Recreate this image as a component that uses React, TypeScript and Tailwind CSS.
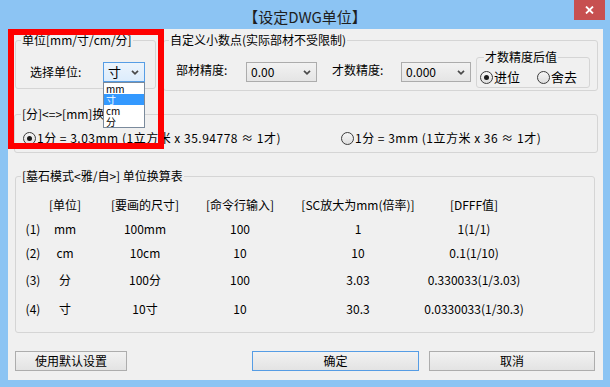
import React from "react";

const FONT = "font-['Noto_Sans_CJK_SC','Noto_Sans',sans-serif]";

function Chevron() {
  return (
    <svg width="8" height="5" viewBox="0 0 8 5" className="shrink-0">
      <path d="M1 0.8l3 3 3-3" fill="none" stroke="#4a4a4a" strokeWidth="1.7" />
    </svg>
  );
}

function Combo({ value, className, focused }: { value: string; className: string; focused?: boolean }) {
  return (
    <div
      className={`flex h-[20px] items-center justify-between border pl-[4px] pr-[5px] ${
        focused
          ? "border-[#569de5] bg-gradient-to-b from-[#ecf4fc] to-[#dcecfc] text-[13px]"
          : "border-[#acacac] bg-gradient-to-b from-[#f2f2f2] to-[#e5e5e5] text-[12px]"
      } ${className}`}
    >
      <span className="leading-[14px]">{value}</span>
      <Chevron />
    </div>
  );
}

function Radio({ checked }: { checked?: boolean }) {
  return (
    <span className="flex h-[13px] w-[13px] shrink-0 items-center justify-center rounded-full border border-[#3c3c3c] bg-gradient-to-b from-[#f6f6f6] to-[#dedede]">
      {checked ? <span className="h-[5px] w-[5px] rounded-full bg-[#1a1a1a]" /> : null}
    </span>
  );
}

function Group({
  legend,
  className,
  legendClass = "ml-[5px]",
  children,
}: {
  legend: string;
  className: string;
  legendClass?: string;
  children?: React.ReactNode;
}) {
  return (
    <fieldset className={`rounded-[3px] border border-[#d5d5d5] ${className}`}>
      <legend className={`px-[1px] leading-[14px] ${legendClass}`}>{legend}</legend>
      {children}
    </fieldset>
  );
}

const rows = [
  ["(1)", "mm", "100mm", "100", "1", "1(1/1)", "h-[24px]"],
  ["(2)", "cm", "10cm", "10", "10", "0.1(1/10)", "h-[24px]"],
  ["(3)", "分", "100分", "100", "3.03", "0.330033(1/3.03)", "h-[30px]"],
  ["(4)", "寸", "10寸", "10", "30.3", "0.0330033(1/30.3)", "h-[28px]"],
];

const cols = ["w-[26px]", "w-[38px]", "w-[122px]", "w-[68px]", "w-[168px]", "w-[64px]"];

function Row({ cells, height }: { cells: string[]; height: string }) {
  return (
    <div className={`flex items-center pl-[4px] ${height}`}>
      {cells.map((c, i) => (
        <div key={i} className={`flex shrink-0 justify-center whitespace-nowrap ${cols[i]}`}>
          {c}
        </div>
      ))}
    </div>
  );
}

export default function App() {
  return (
    <div className={`flex h-[387px] w-[610px] flex-col bg-[#8cc4f3] text-[12px] leading-[14px] text-black ${FONT}`}>
      {/* title bar */}
      <div className="relative flex h-[29px] shrink-0 items-center justify-center pt-[5px]">
        <span className="text-[15px] leading-[18px] text-[#1e1e1e]">【设定DWG单位】</span>
        <div className="absolute right-[5px] top-0 flex h-[20px] w-[31px] items-center justify-center bg-[#c75050]">
          <svg width="9" height="8" viewBox="0 0 9 8">
            <path d="M1 0.5l7 7M8 0.5l-7 7" stroke="#fff" strokeWidth="1.8" />
          </svg>
        </div>
      </div>

      {/* client area */}
      <div className="relative ml-[8px] h-[351px] w-[595px] bg-[#f0f0f0]">
        <div className="flex items-start pl-[7px] pt-[4px]">
          <Group legend="单位[mm/寸/cm/分]" className="h-[56px] w-[141px]">
            <div className="mt-[15px] flex h-[20px] items-center pl-[14px]">
              <span className="w-[73px]">选择单位:</span>
              <Combo value="寸" focused className="w-[42px]" />
            </div>
          </Group>

          <Group legend="自定义小数点(实际部材不受限制)" className="ml-[7px] h-[58px] w-[435px]">
            <div className="flex items-start pl-[12px]">
              <span className="mt-[16px] w-[70px]">部材精度:</span>
              <Combo value="0.00" className="mt-[15px] w-[71px]" />
              <span className="ml-[15px] mt-[16px] w-[69px]">才数精度:</span>
              <Combo value="0.000" className="mt-[15px] w-[70px]" />
              <Group legend="才数精度后值" legendClass="ml-[7px]" className="ml-[5px] mt-[3px] h-[38px] w-[114px]">
                <div className="mt-[6px] flex h-[14px] items-center pl-[3px] text-[13px]">
                  <Radio checked />
                  <span className="ml-[1px]">进位</span>
                  <span className="ml-[17px]">
                    <Radio />
                  </span>
                  <span className="ml-[1px]">舍去</span>
                </div>
              </Group>
            </div>
          </Group>
        </div>

        <Group legend="[分]<=>[mm]换算" legendClass="ml-[6px]" className="ml-[6px] mt-[16px] h-[46px] w-[584px]">
          <div className="mt-[10px] flex h-[14px] items-center pl-[8px] tracking-[0.5px]">
            <div className="flex w-[318px] items-center">
              <Radio checked />
              <span className="ml-[1px] whitespace-nowrap">1分 = 3.03mm (1立方米 x 35.94778 ≈ 1才)</span>
            </div>
            <Radio />
            <span className="ml-[1px] whitespace-nowrap">1分 = 3mm (1立方米 x 36 ≈ 1才)</span>
          </div>
        </Group>

        <Group legend="[墓石模式<雅/自>] 单位换算表" className="ml-[7px] mt-[16px] h-[164px] w-[580px]">
          <div className="mt-[10px]">
            <Row cells={["", "[单位]", "[要画的尺寸]", "[命令行输入]", "[SC放大为mm(倍率)]", "[DFFF值]"]} height="h-[24px]" />
            {rows.map((r) => (
              <Row key={r[0]} cells={r.slice(0, 6)} height={r[6]} />
            ))}
          </div>
        </Group>

        <div className="mt-[18px] flex h-[20px] pl-[7px]">
          <button className="w-[112px] border border-[#adadad] bg-gradient-to-b from-[#f2f2f2] to-[#e3e3e3]">使用默认设置</button>
          <button className="ml-[125px] w-[167px] border border-[#569de5] bg-gradient-to-b from-[#f2f2f2] to-[#e3e3e3]">确定</button>
          <button className="ml-[10px] w-[166px] border border-[#adadad] bg-gradient-to-b from-[#f2f2f2] to-[#e3e3e3]">取消</button>
        </div>

        {/* open drop-down list of the unit combo */}
        <div className="absolute left-[95px] top-[53px] w-[42px] border border-[#7a8a9c] bg-white text-[10px] leading-[11px]">
          <div className="h-[11px] pl-[2px]">mm</div>
          <div className="h-[11px] bg-[#3399ff] pl-[2px] text-white">寸</div>
          <div className="h-[11px] pl-[2px]">cm</div>
          <div className="h-[11px] pl-[2px]">分</div>
        </div>

        {/* red annotation frame */}
        <div className="pointer-events-none absolute left-0 top-0 h-[120px] w-[156px] border-[6px] border-[#ff0000]" />
      </div>
    </div>
  );
}
